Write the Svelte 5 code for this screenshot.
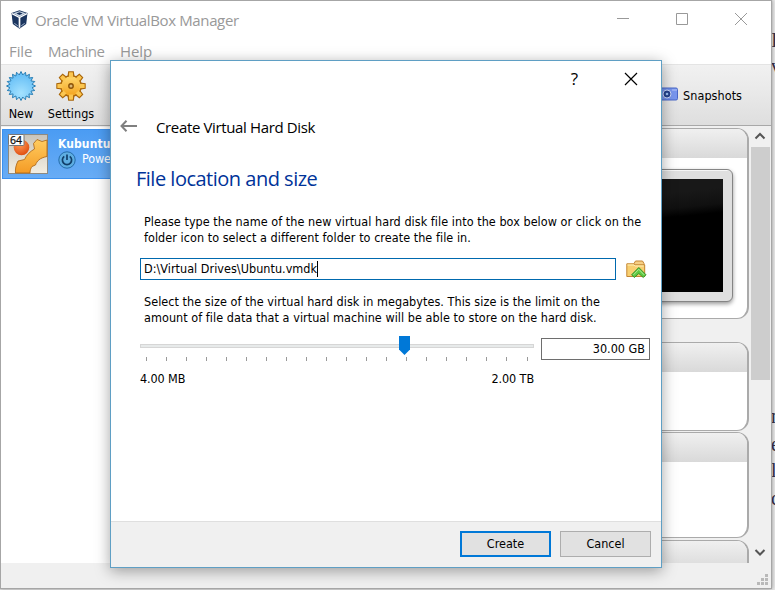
<script>
  const ticks = Array.from({ length: 18 }, (_, i) => i);
  const panels = [
    { name: 'preview', screen: true },
    { name: 'storage', screen: false },
    { name: 'network', screen: false },
    { name: 'usb', screen: false }
  ];
  const burst = (count, outer, inner, c) =>
    Array.from({ length: count * 2 }, (_, i) => {
      const a = (Math.PI * i) / count - Math.PI / 2;
      const r = i % 2 ? inner : outer;
      return `${(c + r * Math.cos(a)).toFixed(2)},${(c + r * Math.sin(a)).toFixed(2)}`;
    }).join(' ');
  const star = burst(20, 14.5, 11.2, 15);
  const teeth = [0, 45, 90, 135, 180, 225, 270, 315];
</script>

<div class="desktop">
  <div class="page-behind">
    <span style:top="30px">I</span><span style:top="56px">v</span>
    <span style:top="406px">m</span><span style:top="434px">e</span>
    <span style:top="460px">l</span><span style:top="488px">c</span>
  </div>

  <div class="manager">
    <header class="titlebar">
      <svg class="logo" width="17" height="19" viewBox="0 0 17 19">
        <path d="M.5 3 8.500.3 16.500 3l-1.300 11-6.700 4.700L1.800 14z" fill="#1b355f" />
        <path d="M2.200 3.300 8.500 1.300l6.300 2-6.300 3.500z" fill="#c9d5e2" />
        <path d="M5.300 3.500 8.500 2.300l3.200 1.200-3.200 1.500z" fill="#17305a" />
        <path d="M1 3.600 8.500 7.600 16 3.600" fill="none" stroke="#fff" stroke-width="1.200" />
        <path d="M8.500 7.500v10.300" stroke="#fff" stroke-width="1.700" />
        <path d="M3.300 13.300 6.800 15.800M13.700 13.300l-3.500 2.500" stroke="#9db0c8" stroke-width="1" />
      </svg>
      <span class="app-name">Oracle VM VirtualBox Manager</span>
      <div class="controls">
        <svg width="14" height="14" viewBox="0 0 14 14"><path d="M1 6.500h12" /></svg>
        <svg width="14" height="14" viewBox="0 0 14 14"><path d="M1.500 1.500h11v11h-11z" /></svg>
        <svg width="14" height="14" viewBox="0 0 14 14"><path d="M1 1l12 12M13 1 1 13" /></svg>
      </div>
    </header>

    <nav class="menu"><span class="m1">File</span><span class="m2">Machine</span><span class="m3">Help</span></nav>

    <div class="toolbar">
      <div class="tool new">
        <svg width="30" height="30" viewBox="0 0 30 30">
          <defs><radialGradient id="blue" cx=".5" cy=".75" r=".7"><stop offset="0" stop-color="#a4e2ff" /><stop offset="1" stop-color="#62bcf5" /></radialGradient></defs>
          <polygon points={star} fill="url(#blue)" stroke="#2a7fb5" stroke-width="1" />
        </svg>
        <span>New</span>
      </div>
      <div class="tool settings">
        <svg width="30" height="30" viewBox="0 0 30 30">
          <defs><linearGradient id="gold" x2="0" y2="1"><stop offset="0" stop-color="#ffda72" /><stop offset="1" stop-color="#f3a21c" /></linearGradient></defs>
          <g fill="#f9bb40" stroke="#a9660a" stroke-width="1.200">
            {#each teeth as t}<path d="M12 6 12.700.9h4.600L18 6z" transform="rotate({t} 15 15)" />{/each}
            <circle cx="15" cy="15" r="10.300" fill="url(#gold)" />
          </g>
          <g fill="#fbc650">{#each teeth as t}<path d="M12.800 6.500 13.300 1.600h3.400l.5 4.900z" transform="rotate({t} 15 15)" />{/each}</g>
          <circle cx="15" cy="15" r="2.200" fill="#d9b878" stroke="#8a5208" stroke-width="1.400" />
        </svg>
        <span>Settings</span>
      </div>
      <div class="snap">
        <svg width="18" height="14" viewBox="0 0 18 14">
          <rect x=".5" y="1" width="17" height="12" rx="1.500" fill="#7896ee" stroke="#4a68c8" />
          <path d="M12 3h5" stroke="#b5c6fa" />
          <circle cx="7" cy="7" r="4" fill="#27438f" stroke="#cbd8fa" />
          <circle cx="7" cy="7" r="1.300" fill="#9fc4f5" />
        </svg>
        <span>Snapshots</span>
      </div>
    </div>

    <div class="body">
      <div class="list">
        <div class="vm">
          <svg width="40" height="40" viewBox="0 0 40 40">
            <defs>
              <linearGradient id="sand" x2="0" y2="1"><stop offset="0" stop-color="#c9c4ba" /><stop offset="1" stop-color="#f3eee2" /></linearGradient>
              <linearGradient id="amber" x2="0" y2="1"><stop offset="0" stop-color="#ffcc60" /><stop offset="1" stop-color="#f49b25" /></linearGradient>
              <radialGradient id="ball" cx=".4" cy=".3" r=".8"><stop offset="0" stop-color="#ff9a58" /><stop offset="1" stop-color="#dc4508" /></radialGradient>
            </defs>
            <rect x=".5" y=".5" width="39" height="39" fill="url(#sand)" stroke="#8e8a80" />
            <circle cx="13.500" cy="13.500" r="7.800" fill="url(#ball)" />
            <path d="M39 6 34 7.500 29 5.500 25.500 9.500 26.500 15C22 17.500 18.500 21 16.500 25.500L10 27c-2 4-3 8-2.500 12H22c0-3 1-5 2-6.500l3.500-1.500c1.500-4 4-7 11.500-8.500z" fill="url(#amber)" stroke="#a86213" stroke-width=".8" />
            <rect x=".5" y=".5" width="15.500" height="11" rx="1" fill="#fff" stroke="#777" />
            <text x="2" y="10" font-family="Noto Sans, sans-serif" font-size="10.500" fill="#111" stroke="#111" stroke-width=".25">64</text>
          </svg>
          <div class="vm-info">
            <b>Kubuntu</b>
            <div class="state">
              <svg width="18" height="18" viewBox="0 0 18 18">
                <circle cx="9" cy="9" r="8.200" fill="#5eaee2" stroke="#256ca9" />
                <path d="M6.200 5.300a4.600 4.600 0 1 0 5.600 0M9 3.500V9" fill="none" stroke="#113f69" stroke-width="1.700" />
              </svg>
              <span>Powered Off</span>
            </div>
          </div>
        </div>
      </div>
      <div class="details">
        {#each panels as p}
          <section class="panel {p.name}">
            <div class="head"></div>
            {#if p.screen}<div class="monitor"><div class="screen"></div></div>{/if}
          </section>
        {/each}
      </div>
      <div class="scroll">
        <svg width="18" height="20" viewBox="0 0 18 20"><path d="m4.500 12.500 4.500-4.500 4.500 4.500" /></svg>
        <div class="thumb"></div>
        <svg width="18" height="20" viewBox="0 0 18 20"><path d="m4.500 7 4.500 4.500L13.500 7" /></svg>
      </div>
    </div>
    <footer class="status">
      <svg width="11" height="11" viewBox="0 0 11 11" fill="#b9b9b9"><path d="M8 0h3v3H8zM4 4h3v3H4zM8 4h3v3H8zM0 8h3v3H0zM4 8h3v3H4zM8 8h3v3H8z" /></svg>
    </footer>
  </div>

  <div class="dialog" role="dialog">
    <div class="dialog-top">
      <span class="help">?</span>
      <svg width="14" height="14" viewBox="0 0 14 14"><path d="M1 1l12 12M13 1 1 13" stroke="#000" stroke-width="1.200" /></svg>
    </div>
    <div class="wizard-title">
      <svg width="17" height="14" viewBox="0 0 17 14" fill="none" stroke="#808080" stroke-width="2"><path d="M1.500 7H17M6.500 1.800 1.500 7l5 5.200" /></svg>
      <span>Create Virtual Hard Disk</span>
    </div>
    <div class="content">
      <h1>File location and size</h1>
      <p><span class="t1">Please type the name of the new virtual hard disk file into the box below or click on the</span><br /><span class="t2">folder icon to select a different folder to create the file in.</span></p>
      <div class="location">
        <div class="field"><span>D:\Virtual Drives\Ubuntu.vmdk</span><i></i></div>
        <svg width="21" height="19" viewBox="0 0 21 19">
          <path d="M8 3.500 9.500 1h7l1.500 2.500V14H8z" fill="#f6cf85" stroke="#c48533" />
          <path d="M.8 3.800h7l1.200 1h9.700v11.700H.8z" fill="#f8cf70" stroke="#c48533" />
          <path d="M1.500 5h6.500l1.200 1h8.500" stroke="#fff0b8" fill="none" />
          <path d="m12.800 7.500 7.200 7.300-2.700 2.700-1.700-1.500-2.800-2.500-2.800 2.500L8.300 17.500 5.600 14.800z" fill="#5fc943" stroke="#2f8b22" stroke-width=".9" />
          <path d="m7.500 14.800 5.300-5.500 5.300 5.500" stroke="#b4ec97" fill="none" />
        </svg>
      </div>
      <p class="second"><span class="t3">Select the size of the virtual hard disk in megabytes. This size is the limit on the</span><br /><span class="t4">amount of file data that a virtual machine will be able to store on the hard disk.</span></p>
      <div class="size">
        <div class="slider">
          <svg width="394" height="29" viewBox="0 0 394 29">
            <rect x=".5" y="8.500" width="393" height="3" fill="#e7eaea" stroke="#d6d6d6" />
            {#each ticks as t}<path d="M{6.5 + t * 20} 21v4" stroke="#999" />{/each}
            <path d="M366.500 21v4M387.500 21v4" stroke="#999" />
            <path d="M259 0h11v13.500l-5.500 5.500-5.500-5.500z" fill="#0078d7" />
          </svg>
          <div class="range"><span>4.00 MB</span><span>2.00 TB</span></div>
        </div>
        <div class="value"><span>30.00 GB</span></div>
      </div>
    </div>
    <div class="actions">
      <button class="primary"><span>Create</span></button>
      <button><span>Cancel</span></button>
    </div>
  </div>
</div>

<style>
  .desktop { position: relative; width: 775px; height: 590px; overflow: hidden; background: #e9e9e9; font: 12.500px/16px "DejaVu Sans Condensed", "DejaVu Sans", sans-serif; font-stretch: condensed; color: #000; }
  .desktop * { box-sizing: border-box; }
  svg { display: block; flex: none; }
  span, b { white-space: nowrap; }
  .page-behind { position: absolute; left: 772px; top: 0; width: 3px; height: 590px; overflow: hidden; font: 20px/20px "Liberation Serif", serif; color: #35304a; }
  .page-behind span { position: absolute; left: -1px; }
  .manager { width: 772px; height: 589px; border: 1px solid #a6a6a6; background: #fff; display: flex; flex-direction: column; box-shadow: 0 0 4px rgba(0,0,0,.4); position: relative; }
  .titlebar { height: 39px; display: flex; align-items: center; padding-left: 10px; }
  .logo { margin-top: -2px; }
  .app-name { margin-left: 7px; font: 15px/20px "Open Sans", sans-serif; color: #999; letter-spacing: -.36px; margin-top: -1px; }
  .controls { margin-left: auto; display: flex; gap: 45px; padding-right: 23px; margin-top: -3px; }
  .controls path { fill: none; stroke: #999; }
  .menu { height: 24px; display: flex; font: 15px/23px "Open Sans", sans-serif; color: #999; padding-left: 8px; }
  .m1 { width: 39px; letter-spacing: -.1px; } .m2 { width: 72px; letter-spacing: -.45px; } .m3 { letter-spacing: -.1px; }
  .toolbar { height: 62px; display: flex; background: linear-gradient(#f1f1f1, #e9e9e9 45%, #dedede); border-top: 1px solid #e4e4e4; border-bottom: 1px solid #a8a8a8; padding: 6px 29px 0 5px; }
  .tool { display: flex; flex-direction: column; align-items: center; gap: 5px; }
  .new { width: 30px; } .settings { width: 50px; margin-left: 10px; }
  .snap { margin-left: auto; height: 48px; display: flex; align-items: center; gap: 5px; }
  .snap svg { margin-top: -3px; }
  .snap span { margin-top: 1px; }
  .tool span, .snap span { letter-spacing: .05px; }
  .body { height: 437px; display: flex; background: #f0f0f0; }
  .list { width: 350px; background: #fff; padding: 2px 1px; border-top: 1px solid #f0f0f0; }
  .vm { height: 50px; background: linear-gradient(#4b9cf3, #68acf5); border: 1px solid #3c91ef; color: #fff; display: flex; padding: 4px 0 0 5px; gap: 10px; }
  .vm b { font-size: 12px; letter-spacing: .1px; display: block; line-height: 16px; margin-top: 2px; margin-bottom: -1px; }
  .state { display: flex; gap: 6px; align-items: center; }
  .state span { letter-spacing: -.1px; margin-top: -2px; }
  .details { width: 399px; padding: 2px 1px 0 10px; display: flex; flex-direction: column; overflow: hidden; }
  .panel { flex: none; border: 1px solid #aaa; border-right-width: 2px; border-radius: 12px; background: #fff; overflow: hidden; display: flex; flex-direction: column; align-items: flex-end; }
  .head { width: 100%; height: 29px; flex: none; background: linear-gradient(#f0f0f0, #d9d9d9); }
  .preview { height: 191px; margin-bottom: 23px; }
  .storage { height: 89px; margin-bottom: 1px; } .network { height: 106px; margin-bottom: 2px; } .usb { height: 105px; }
  .monitor { width: 190px; height: 133px; margin: 11px 14px 0 0; padding: 9px; border: 1px solid #858585; border-radius: 6px; background: #dfdfdf; box-shadow: 0 2px 4px #999, inset 1px 1px #f6f6f6; }
  .screen { height: 100%; background: linear-gradient(174deg, #181818 0 20%, #101010 32%, #000 39%); }
  .scroll { width: 21px; padding-left: 1px; display: flex; flex-direction: column; background: #f0f0f0; }
  .scroll path { fill: none; stroke: #555; stroke-width: 2; }
  .thumb { height: 233px; margin: 1px 0 auto; width: 19px; background: #cdcdcd; }
  .status { height: 25px; background: #f0f0f0; display: flex; justify-content: flex-end; align-items: flex-end; padding: 0 3px 3px 0; }
  .dialog { position: absolute; left: 110px; top: 60px; width: 552px; height: 508px; border: 1px solid #5f9fc4; background: #fff; box-shadow: 0 3px 14px rgba(0,0,0,.36); display: flex; flex-direction: column; }
  .dialog-top { height: 36px; display: flex; justify-content: flex-end; align-items: center; padding-right: 23px; gap: 46px; }
  .help { font: 17px/20px "Open Sans", sans-serif; }
  .wizard-title { height: 60px; display: flex; align-items: center; padding-left: 9px; gap: 19px; }
  .wizard-title svg { margin-top: -3px; }
  .wizard-title span { font: 15px/20px "Open Sans", sans-serif; letter-spacing: -.36px; }
  .content { flex: 1; padding: 10px 11px 0 29px; }
  h1 { margin: 0 0 0 -4px; font: 400 20px/24px "Open Sans", sans-serif; color: #003399; letter-spacing: -.5px; }
  p { margin: 23px 0 0 4px; line-height: 16px; }
  .t1, .t2, .t3, .t4 { letter-spacing: .05px; }
  .location { display: flex; margin-top: 12px; gap: 10px; align-items: center; }
  .field { width: 476px; height: 22px; border: 1px solid #0069ae; display: flex; align-items: center; padding-left: 3px; letter-spacing: .03px; }
  .field i { width: 1px; height: 16px; background: #000; }
  .second { margin-top: 14px; }
  .size { display: flex; gap: 7px; margin-top: 10px; }
  .range { display: flex; justify-content: space-between; margin-top: 6px; letter-spacing: -.1px; }
  .value { width: 109px; height: 22px; margin-top: 2px; border: 1px solid #6e6e6e; display: flex; align-items: center; justify-content: flex-end; padding-right: 4px; }
  .actions { height: 46px; border-top: 1px solid #dfdfdf; background: #f0f0f0; display: flex; justify-content: flex-end; gap: 9px; padding: 9px 10px 0 0; }
  button { width: 91px; height: 26px; border: 1px solid #adadad; background: #e1e1e1; font: inherit; color: #000; padding: 0; }
  .primary { border: 2px solid #0078d7; }
</style>
